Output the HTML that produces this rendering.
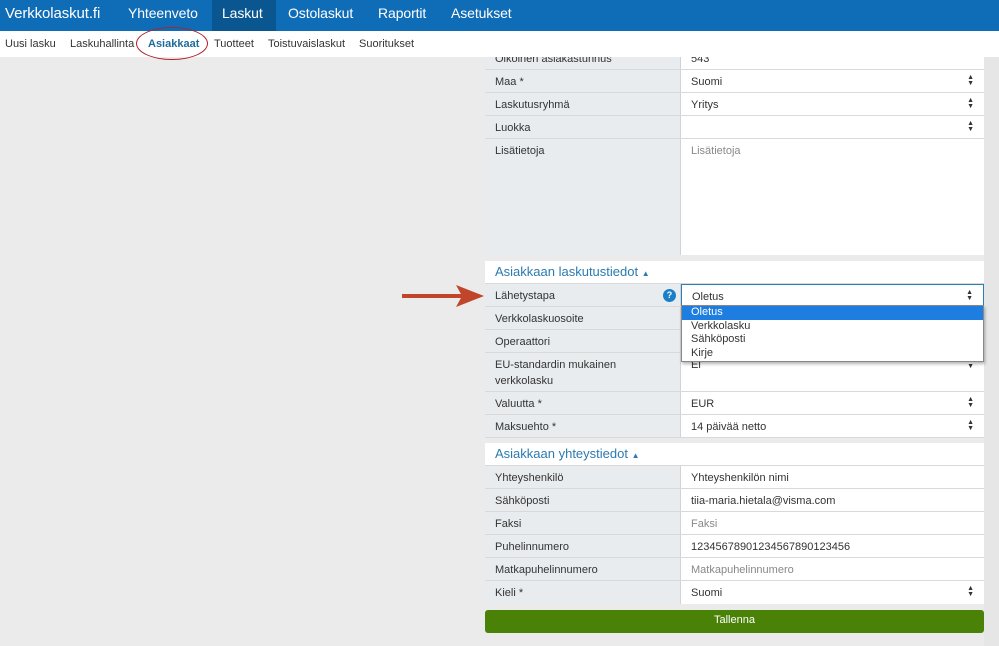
<!DOCTYPE html>
<html><head><meta charset="utf-8"><style>
*{box-sizing:border-box;margin:0;padding:0}
body{width:999px;height:646px;overflow:hidden;background:#ebebeb;font-family:"Liberation Sans",Arial,sans-serif;font-size:11px;color:#333;position:relative}
.a{position:absolute}
.top{left:0;top:0;width:999px;height:31px;background:#0f6cb6}
.top span{position:absolute;top:5px;color:#fff;font-size:14px;letter-spacing:-0.1px}
.sub{left:0;top:31px;width:999px;height:26px;background:#fff}
.sub span{position:absolute;top:7px;font-size:11px;color:#333}
.rstrip{left:984px;top:57px;width:15px;height:589px;background:#e6e6e6}
.row{position:absolute;left:485px;width:499px;border-bottom:1px solid #d9d9d9}
.lab{position:absolute;left:0;top:0;bottom:0;width:196px;background:#e9ecef;padding:4px 10px;border-right:1px solid #d3d3d3;line-height:16px}
.val{position:absolute;left:196px;right:0;top:0;bottom:0;background:#fff;padding:4px 10px;line-height:16px}
.ph{color:#888}
.arr{position:absolute;right:10px;top:5px;font-size:7px;line-height:6px;color:#333}
.hdr{position:absolute;left:485px;width:499px;height:23px;background:#fff;color:#2b7bb0;font-size:13px;padding:3px 10px;border-bottom:1px solid #d9d9d9}
</style></head><body>
<div class="a top">
<span style="left:5px;font-size:15px">Verkkolaskut.fi</span>
<span style="left:128px">Yhteenveto</span>
<div class="a" style="left:212px;top:0;width:64px;height:31px;background:#0a5690"></div>
<span style="left:222px">Laskut</span>
<span style="left:288px">Ostolaskut</span>
<span style="left:378px">Raportit</span>
<span style="left:451px">Asetukset</span>
</div>
<div class="a sub">
<span style="left:5px">Uusi lasku</span>
<span style="left:70px">Laskuhallinta</span>
<span style="left:148px;font-weight:bold;color:#1f6b9a">Asiakkaat</span>
<span style="left:214px">Tuotteet</span>
<span style="left:268px">Toistuvaislaskut</span>
<span style="left:359px">Suoritukset</span>
<div class="a" style="left:136px;top:-4px;width:72px;height:33px;border:1.5px solid #b0202a;border-radius:50%"></div>
</div>
<div class="a rstrip"></div>

<div class="row" style="top:57px;height:13px;overflow:hidden"><div class="lab" style="top:-10px">Oikolnen asiakastunnus</div><div class="val" style="top:-10px">543</div></div>
<div class="row" style="top:70px;height:23px"><div class="lab">Maa *</div><div class="val">Suomi<span class="arr">▲<br>▼</span></div></div>
<div class="row" style="top:93px;height:23px"><div class="lab">Laskutusryhmä</div><div class="val">Yritys<span class="arr">▲<br>▼</span></div></div>
<div class="row" style="top:116px;height:23px"><div class="lab">Luokka</div><div class="val"><span class="arr">▲<br>▼</span></div></div>
<div class="row" style="top:139px;height:116px;border:none"><div class="lab">Lisätietoja</div><div class="val ph">Lisätietoja</div></div>

<div class="hdr" style="top:261px">Asiakkaan laskutustiedot <span style="font-size:8px">▲</span></div>
<div class="row" style="top:284px;height:23px"><div class="lab">Lähetystapa<span class="a" style="left:178px;top:5px;width:13px;height:13px;border-radius:50%;background:#1a7fc9;color:#fff;font-size:9px;font-weight:bold;text-align:center;line-height:13px">?</span></div><div class="val" style="border:1px solid #2a7fb8">Oletus<span class="arr">▲<br>▼</span></div></div>
<div class="row" style="top:307px;height:23px"><div class="lab">Verkkolaskuosoite</div><div class="val"></div></div>
<div class="row" style="top:330px;height:23px"><div class="lab">Operaattori</div><div class="val"></div></div>
<div class="row" style="top:353px;height:39px"><div class="lab">EU-standardin mukainen verkkolasku</div><div class="val">Ei<span class="arr">▲<br>▼</span></div></div>
<div class="row" style="top:392px;height:23px"><div class="lab">Valuutta *</div><div class="val">EUR<span class="arr">▲<br>▼</span></div></div>
<div class="row" style="top:415px;height:23px"><div class="lab">Maksuehto *</div><div class="val">14 päivää netto<span class="arr">▲<br>▼</span></div></div>

<div class="a" style="left:681px;top:305px;width:303px;height:57px;background:#fff;border:1px solid #888;box-shadow:1px 2px 3px rgba(0,0,0,.3);font-size:11px;line-height:13.5px">
<div style="background:#1e7de0;color:#fff;padding:0 9px">Oletus</div>
<div style="padding:0 9px">Verkkolasku</div>
<div style="padding:0 9px">Sähköposti</div>
<div style="padding:0 9px">Kirje</div>
</div>

<div class="hdr" style="top:443px">Asiakkaan yhteystiedot <span style="font-size:8px">▲</span></div>
<div class="row" style="top:466px;height:23px"><div class="lab">Yhteyshenkilö</div><div class="val">Yhteyshenkilön nimi</div></div>
<div class="row" style="top:489px;height:23px"><div class="lab">Sähköposti</div><div class="val">tiia-maria.hietala@visma.com</div></div>
<div class="row" style="top:512px;height:23px"><div class="lab">Faksi</div><div class="val ph">Faksi</div></div>
<div class="row" style="top:535px;height:23px"><div class="lab">Puhelinnumero</div><div class="val">12345678901234567890123456</div></div>
<div class="row" style="top:558px;height:23px"><div class="lab">Matkapuhelinnumero</div><div class="val ph">Matkapuhelinnumero</div></div>
<div class="row" style="top:581px;height:23px;border:none"><div class="lab">Kieli *</div><div class="val">Suomi<span class="arr">▲<br>▼</span></div></div>

<div class="a" style="left:485px;top:610px;width:499px;height:23px;background:#4a8208;border-radius:3px;color:#fff;text-align:center;line-height:21px">Tallenna</div>

<svg class="a" style="left:400px;top:283px" width="86" height="26" viewBox="0 0 86 26"><path d="M2 13H64" stroke="#c0452a" stroke-width="4"/><path d="M56 2L84 13L56 24L62 13Z" fill="#c0452a"/></svg>
</body></html>
